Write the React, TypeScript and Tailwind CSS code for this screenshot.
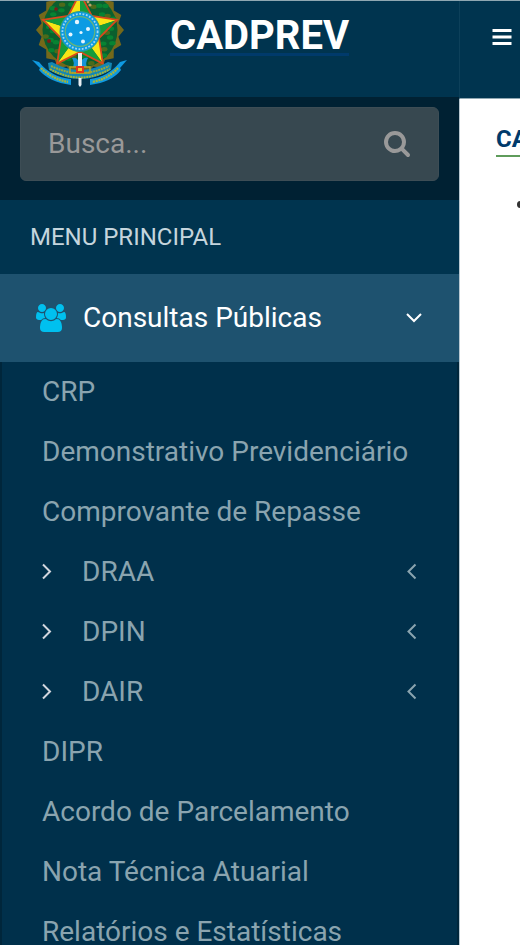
import { useState } from "react";

type MenuEntry = {
  label: string;
  tree?: boolean;
};

const entries: MenuEntry[] = [
  { label: "CRP" },
  { label: "Demonstrativo Previdenciário" },
  { label: "Comprovante de Repasse" },
  { label: "DRAA", tree: true },
  { label: "DPIN", tree: true },
  { label: "DAIR", tree: true },
  { label: "DIPR" },
  { label: "Acordo de Parcelamento" },
  { label: "Nota Técnica Atuarial" },
  { label: "Relatórios e Estatísticas" },
];

// star geometry, five points split in a yellow and a green half
const starPoints = [0, 1, 2, 3, 4].map((i) => {
  const at = (deg: number, r: number) => {
    const a = ((deg - 90) * Math.PI) / 180;
    return `${(80 + r * Math.cos(a)).toFixed(1)},${(32 + r * Math.sin(a)).toFixed(1)}`;
  };
  const d = i * 72;
  return { tip: at(d, 39), left: at(d - 36, 20), right: at(d + 36, 20) };
});

const wreath = Array.from({ length: 36 }, (_, i) => {
  const a = (i * Math.PI) / 18;
  const r = i % 2 ? 39 : 44;
  return `${(80 + r * Math.cos(a)).toFixed(1)},${(30 + r * Math.sin(a)).toFixed(1)}`;
}).join(" ");

const leaves = Array.from({ length: 44 }, (_, i) => {
  const a = (i * Math.PI) / 22 + 0.1;
  const r = 27 + (i % 3) * 4;
  return { x: 80 + r * Math.cos(a), y: 30 + r * Math.sin(a) };
});

function Emblem() {
  return (
    <svg viewBox="32 1 96 88" className="block h-[88px] w-24" aria-hidden="true">
      <polygon points={wreath} fill="#74691a" />
      <circle cx="80" cy="30" r="37.500" fill="#0b5f2e" />
      {leaves.map((leaf, i) => (
        <ellipse key={i} cx={leaf.x} cy={leaf.y} rx="3.200" ry="2.200" fill={i % 4 ? "#078332" : "#4d6a1a"} />
      ))}
      <circle cx="56" cy="9" r="1.8" fill="#7c1c17" />
      <circle cx="49" cy="41" r="2" fill="#7c1c17" />
      <circle cx="50" cy="28" r="1.2" fill="#7c1c17" />
      <circle cx="90" cy="5" r="1.6" fill="#b9a568" />
      <circle cx="88" cy="2" r="1.4" fill="#b9a568" />
      {starPoints.map((p) => (
        <g key={p.tip}>
          <polygon points={`80,32 ${p.left} ${p.tip}`} fill="#f7e516" />
          <polygon points={`80,32 ${p.right} ${p.tip}`} fill="#169b3b" />
          <polyline points={`${p.left} ${p.tip} ${p.right}`} fill="none" stroke="#d9481c" strokeWidth="1.8" />
        </g>
      ))}
      <circle cx="80" cy="31.500" r="20" fill="#0b9be3" stroke="#2f9b86" strokeWidth="1" />
      <circle cx="80" cy="31.500" r="17.600" fill="none" stroke="#a3d8f3" strokeWidth="1.8" strokeDasharray="1.8 1.6" />
      <circle cx="80" cy="31.500" r="14.800" fill="#0b9be3" stroke="#68b47a" strokeWidth="1.2" />
      <g fill="#e5f5ff">
        <circle cx="77" cy="22" r="2.200" />
        <circle cx="88" cy="29" r="2" />
        <circle cx="70.500" cy="34.500" r="2" />
        <circle cx="81" cy="32.500" r="1.600" />
        <circle cx="83" cy="41.500" r="2" />
      </g>
      <path d="M72 58q4-1 6 2v7h-5q2-4-1-9zM88 58q-4-1-6 2v7h5q-2-4 1-9z" fill="#1594d8" />
      {/* ribbons */}
      <path d="M32 60l7 2q12 15 32 17v6q-22-3-32-15l1-2zM127 60l-7 2q-12 15-30 17v6q22-3 31-15l-1-2z" fill="#0e9ae2" />
      <path d="M48 63l4-1q28 16 56 0l4 1-1 7q-31 18-62 0z" fill="#1387b5" />
      <path d="M51 66q29 14 58 0" fill="none" stroke="#97a93a" strokeWidth="2" strokeDasharray="2 .7" />
      <path d="M50 69q30 17 60 0" fill="none" stroke="#a8b535" strokeWidth="2" strokeDasharray="2 .7" />
      <path d="M41 68q11 11 27 14M118 68q-10 11-26 14" fill="none" stroke="#a8b535" strokeWidth="2.400" strokeDasharray="2 .7" />
      {/* sword */}
      <path d="M78 53h4v14h-4z" fill="#e8eef2" />
      <path d="M70 67h20v6H70z" fill="none" stroke="#b5a422" strokeWidth="1.400" />
      <path d="M76 66h8v7h-8z" fill="#e0351d" />
      <path d="M78 68h4v3h-4z" fill="#f2c52b" />
      <path d="M78.500 78h3v7l-1.500 2-1.500-2z" fill="#e8eef2" />
    </svg>
  );
}

function UsersIcon() {
  return (
    <svg viewBox="0 0 1920 1792" className="h-7 w-[30px] shrink-0" fill="#00c0ef" aria-hidden="true">
      <path d="M593 896q-162 5-265 128h-134q-82 0-138-40.500t-56-118.500q0-353 124-353 6 0 43.500 21t97.500 42.500 119 21.500q67 0 133-23-5 37-5 66 0 139 81 256zm1071 637q0 120-73 189.500t-194 69.500h-874q-121 0-194-69.500t-73-189.500q0-53 3.500-103.500t14-109 26.500-108.500 43-97.500 62-81 85.500-53.500 111.500-20q10 0 43 21.500t73 48 107 48 135 21.500 135-21.500 107-48 73-48 43-21.500q61 0 111.500 20t85.500 53.500 62 81 43 97.500 26.500 108.500 14 109 3.500 103.500zm-1024-1277q0 106-75 181t-181 75-181-75-75-181 75-181 181-75 181 75 75 181zm704 384q0 159-112.500 271.500t-271.500 112.500-271.500-112.500-112.500-271.500 112.500-271.500 271.500-112.500 271.500 112.500 112.500 271.500zm576 225q0 78-56 118.500t-138 40.500h-134q-103-123-265-128 81-117 81-256 0-29-5-66 66 23 133 23 59 0 119-21.500t97.500-42.500 43.500-21q124 0 124 353zm-128-609q0 106-75 181t-181 75-181-75-75-181 75-181 181-75 181 75 75 181z" />
    </svg>
  );
}

function SearchIcon() {
  return (
    <svg viewBox="64 128 1664 1664" className="size-[26px]" fill="#999999" aria-hidden="true">
      <path d="M1216 832q0-185-131.500-316.500t-316.500-131.500-316.500 131.500-131.500 316.500 131.500 316.500 316.500 131.500 316.500-131.500 131.500-316.500zm512 832q0 52-38 90t-90 38q-54 0-90-38l-343-342q-179 124-399 124-143 0-273.500-55.500t-225-150-150-225-55.500-273.500 55.500-273.500 150-225 225-150 273.500-55.500 273.500 55.500 225 150 150 225 55.500 273.500q0 220-124 399l343 343q37 37 37 90z" />
    </svg>
  );
}

function Angle({ to, className }: { to: "left" | "right" | "down"; className: string }) {
  const paths = {
    left: "M12.500 1.500L5.500 8.500L12.500 15.500",
    right: "M5 1.500L12 8.500L5 15.500",
    down: "M2 5L9 12L16 5",
  };
  return (
    <svg viewBox="0 0 18 18" className={className} fill="none" stroke="currentColor" strokeWidth="2" aria-hidden="true">
      <path d={paths[to]} />
    </svg>
  );
}

function Sidebar() {
  const [open, setOpen] = useState(true);
  const [query, setQuery] = useState("");

  return (
    <aside className="w-[459px] shrink-0 bg-[#00344f]">
      <div className="flex h-24 items-start pl-8">
        <Emblem />
        <a href="#inicio" className="mt-[18px] ml-[42px] border-b-[3px] border-[#003a6b] text-[40px] leading-[34px] font-bold text-white">CADPREV</a>
      </div>

      <form className="h-[103px] bg-[#002133] px-5 pt-[10px]" onSubmit={(e) => e.preventDefault()}>
        <div className="flex h-[74px] overflow-hidden rounded-md border border-[#3d4d55] bg-[#374850]">
          <input type="text" aria-label="Busca" placeholder="Busca..." value={query} onChange={(e) => setQuery(e.target.value)} className="min-w-0 flex-1 bg-transparent pl-[27px] text-[28px] text-white outline-none placeholder:text-[#999999]" />
          <button type="submit" aria-label="Buscar" className="flex w-[82px] items-center justify-center">
            <SearchIcon />
          </button>
        </div>
      </form>

      <nav>
        <h2 className="flex h-[74px] items-center pb-px pl-[30px] text-2xl text-[#c5d5dd]">MENU PRINCIPAL</h2>
        <button type="button" aria-expanded={open} onClick={() => setOpen(!open)} className="flex h-[88px] w-full items-center bg-[#1e526f] pr-9 pl-9 text-[28px] text-white">
          <UsersIcon />
          <span className="ml-[17px]">Consultas Públicas</span>
          <Angle to="down" className="ml-auto size-[18px]" />
        </button>
        {open ? (
          <ul className="border-r-2 border-l-2 border-[#00263b] bg-[#00304b] text-[28px] text-[#8aa4af]">
            {entries.map((entry) => (
              <li key={entry.label}>
                <a href="#consulta" className="flex h-[60px] items-center pr-9 pl-10">
                  {entry.tree ? <Angle to="right" className="mr-[26px] -ml-1 size-[18px] text-[#d2d6de]" /> : null}
                  <span className="whitespace-nowrap">{entry.label}</span>
                  {entry.tree ? <Angle to="left" className="ml-auto size-[18px]" /> : null}
                </a>
              </li>
            ))}
          </ul>
        ) : null}
      </nav>
    </aside>
  );
}

export default function App() {
  return (
    <div className="flex h-screen overflow-hidden border-t border-[#8fa7b2] bg-white font-[Roboto,'Liberation_Sans',sans-serif]">
      <Sidebar />
      <div className="flex min-w-0 flex-1 flex-col overflow-hidden">
        <header className="h-[98px] border-b border-l border-b-[#8fa7b2] border-l-[#0d405a] bg-[#00344f] pt-7 pl-8">
          <button type="button" aria-label="Alternar menu" className="block text-white">
            <svg viewBox="0 0 20 16" className="h-4 w-5" fill="currentColor" aria-hidden="true">
              <path d="M.5 0h19v3H.5zM.5 6.500h19v3H.5zM.5 13h19v3H.5z" />
            </svg>
          </button>
        </header>
        <main className="flex-1 border-l border-[#b9c8d1] pt-6 pl-9">
          <h1 className="h-[34px] w-[300px] border-b-2 border-[#5f9c5b] text-2xl font-bold text-[#003a6b]">CA</h1>
          <ul className="mt-11 pl-[21px]">
            <li className="size-[7px] rounded-full bg-[#333333]" />
          </ul>
        </main>
      </div>
    </div>
  );
}
